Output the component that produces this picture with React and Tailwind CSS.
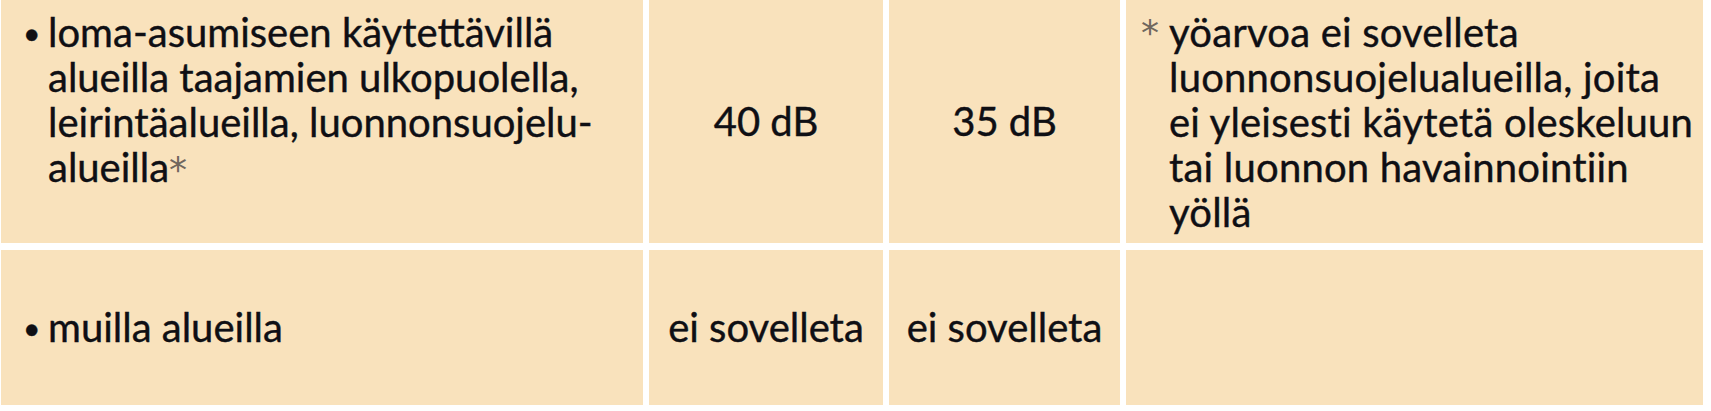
export default function App() {
  const font = { fontFamily: "Lato, 'Open Sans', sans-serif" };
  const star = "text-[#70675e] font-['DejaVu_Sans',sans-serif]";
  return (
    <div
      className="w-[1711px] h-[411px] bg-white pl-[1px] text-[#0f0f14] text-[40px] leading-[45px] [-webkit-text-stroke:0.4px_#0f0f14]"
      style={font}
    >
      <div className="grid grid-cols-[642px_234px_231px_577px] grid-rows-[243px_155px] gap-x-[6px] gap-y-[7px]">
        <div className="bg-[#f9e2bc] pl-[22px] pt-[10px] flex">
          <span className="w-[25px] shrink-0 text-[30px]">•</span>
          <span className="whitespace-nowrap">
            loma-asumiseen käytettävillä
            <br />
            alueilla taajamien ulkopuolella,
            <br />
            leirintäalueilla, luonnonsuojelu-
            <br />
            alueilla<span className={`${star} text-[36px] [-webkit-text-stroke:0px]`}>*</span>
          </span>
        </div>
        <div className="bg-[#f9e2bc] flex items-center justify-center">40 dB</div>
        <div className="bg-[#f9e2bc] flex items-center justify-center">35 dB</div>
        <div className="bg-[#f9e2bc] pl-[15px] pt-[10px] flex">
          <span className={`w-[28px] shrink-0 ${star} text-[36px] [-webkit-text-stroke:0px]`}>*</span>
          <span className="whitespace-nowrap tracking-[0.2px]">
            yöarvoa ei sovelleta
            <br />
            luonnonsuojelualueilla, joita
            <br />
            ei yleisesti käytetä oleskeluun
            <br />
            tai luonnon havainnointiin
            <br />
            yöllä
          </span>
        </div>

        <div className="bg-[#f9e2bc] pl-[22px] flex items-center">
          <span className="w-[25px] shrink-0 text-[30px]">•</span>
          <span>muilla alueilla</span>
        </div>
        <div className="bg-[#f9e2bc] flex items-center justify-center">ei sovelleta</div>
        <div className="bg-[#f9e2bc] flex items-center justify-center">ei sovelleta</div>
        <div className="bg-[#f9e2bc]"></div>
      </div>
    </div>
  );
}
